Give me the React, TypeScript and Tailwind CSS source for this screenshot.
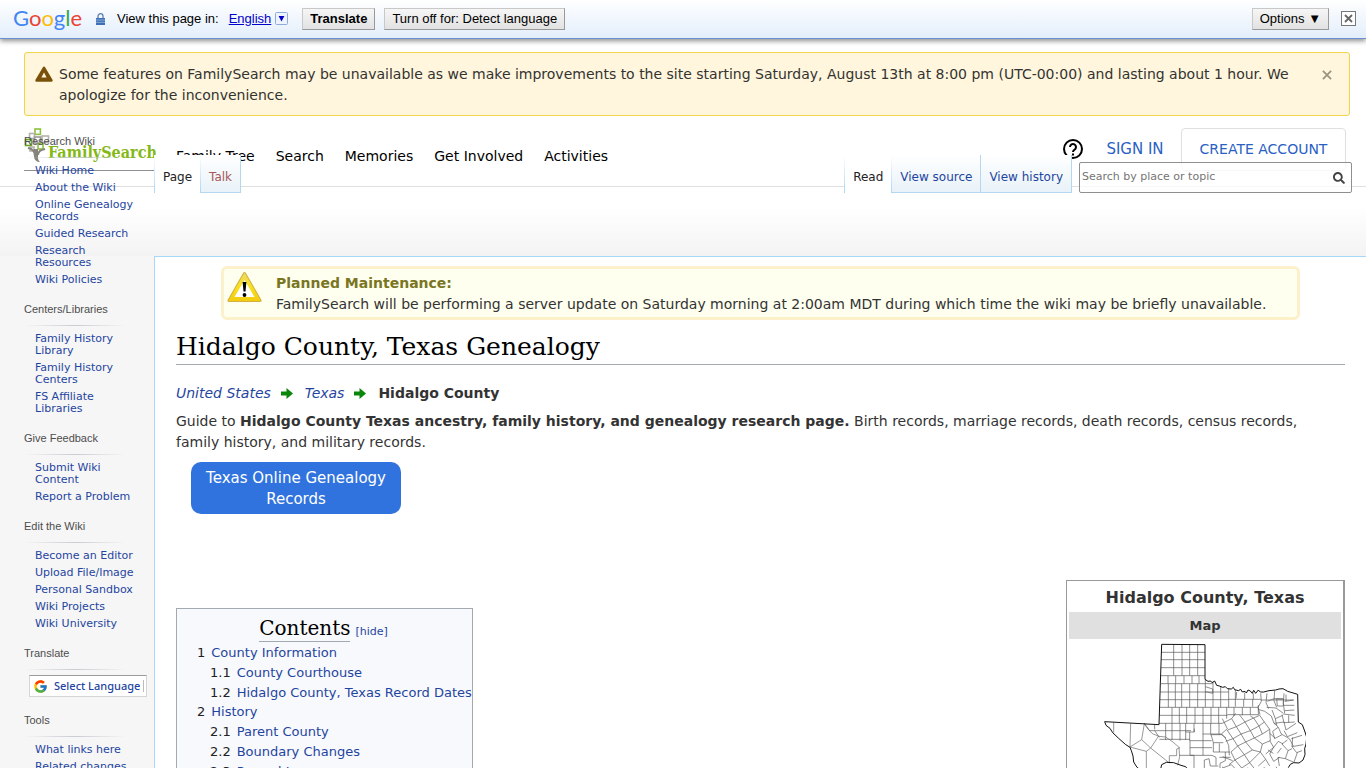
import { FcGoogle } from "react-icons/fc";
import { FaSearch } from "react-icons/fa";

const sections = [
  {
    title: "Research Wiki",
    links: [
      "Wiki Home",
      "About the Wiki",
      "Online Genealogy Records",
      "Guided Research",
      "Research Resources",
      "Wiki Policies",
    ],
  },
  {
    title: "Centers/Libraries",
    links: ["Family History Library", "Family History Centers", "FS Affiliate Libraries"],
  },
  { title: "Give Feedback", links: ["Submit Wiki Content", "Report a Problem"] },
  {
    title: "Edit the Wiki",
    links: [
      "Become an Editor",
      "Upload File/Image",
      "Personal Sandbox",
      "Wiki Projects",
      "Wiki University",
    ],
  },
  { title: "Translate", links: [] },
  { title: "Tools", links: ["What links here", "Related changes"] },
];

const contents = [
  { num: "1", label: "County Information", sub: false },
  { num: "1.1", label: "County Courthouse", sub: true },
  { num: "1.2", label: "Hidalgo County, Texas Record Dates", sub: true },
  { num: "2", label: "History", sub: false },
  { num: "2.1", label: "Parent County", sub: true },
  { num: "2.2", label: "Boundary Changes", sub: true },
  { num: "2.3", label: "Record Loss", sub: true },
];

const navLinks = ["Family Tree", "Search", "Memories", "Get Involved", "Activities"];

const barButton =
  "h-[22px] border border-[#c8c8c8] border-r-[#999] border-b-[#999] bg-linear-to-b from-[#f6f6f6] to-[#e2e2e2] px-[7px] text-[13px] leading-5 text-black whitespace-nowrap";

function TranslateBar() {
  return (
    <div className="relative z-10 flex h-[39px] items-center border-b border-[#6b8fd0] bg-linear-to-b from-white to-[#e3eefb] pr-[10px] pb-px pl-[13px] font-['Liberation_Sans',sans-serif] text-[13px] shadow-[0_2px_5px_rgba(0,0,0,0.45)]">
      <span className="w-[82px] pb-[2px] font-[Lato,sans-serif] text-[22px] leading-6">
        <span className="text-[#4285f4]">G</span>
        <span className="text-[#ea4335]">o</span>
        <span className="text-[#fbbc05]">o</span>
        <span className="text-[#4285f4]">g</span>
        <span className="text-[#34a853]">l</span>
        <span className="text-[#ea4335]">e</span>
      </span>
      <svg className="h-3 w-[11px]" viewBox="0 0 11 12">
        <path d="M3 5V3.2a2.5 2.5 0 0 1 5 0V5" fill="none" stroke="#5b7fb5" strokeWidth="1.3" />
        <rect x="1" y="5" width="9" height="7" fill="#3f6fb4" />
        <path d="M1 7h9M1 9.3h9" stroke="#9bbbe4" strokeWidth="0.8" />
      </svg>
      <span className="ml-[11px] text-black">View this page in:</span>
      <a href="#" className="ml-[10px] flex items-center text-[#0000cc]">
        <span className="underline">English</span>
        <svg className="ml-1 size-[13px]" viewBox="0 0 13 13">
          <rect x="0.5" y="0.5" width="12" height="12" rx="1" fill="#eef4fc" stroke="#8fabdc" />
          <path d="M3.6 4h5.8L6.5 9.5z" fill="#0000cc" />
        </svg>
      </a>
      <button className={`${barButton} ml-[14px] font-bold`}>Translate</button>
      <button className={`${barButton} ml-[9px]`}>Turn off for: Detect language</button>
      <button className={`${barButton} mr-3 ml-auto`}>Options ▼</button>
      <button aria-label="Close" className="size-[15px]">
        <svg viewBox="0 0 15 15">
          <rect x="0.5" y="0.5" width="14" height="14" fill="#fff" stroke="#777" />
          <path d="M4 4l7 7M11 4l-7 7" stroke="#666" strokeWidth="1.8" />
        </svg>
      </button>
    </div>
  );
}

function Notice() {
  return (
    <div className="mr-4 ml-6 flex h-16 rounded-[3px] border border-[#f0d548] bg-[#fff6dd] pt-[11px] pl-[10px] text-[14px] leading-[21px] text-[#333331]">
      <svg className="mt-[2px] h-4 w-[18px] shrink-0" viewBox="0 0 18 16">
        <path d="M9 1.8L16.4 14.4H1.6z" fill="#7a5109" stroke="#7a5109" strokeWidth="2.6" strokeLinejoin="round" />
        <path d="M9 6.6l2.6 4.8H6.4z" fill="#fff6dd" />
      </svg>
      <p className="ml-[6px] flex-1">
        Some features on FamilySearch may be unavailable as we make improvements to the site
        starting Saturday, August 13th at 8:00 pm (UTC-00:00) and lasting about 1 hour. We
        apologize for the inconvenience.
      </p>
      <button aria-label="Dismiss" className="mr-4 flex h-[21px] w-[11px] items-center">
        <svg className="size-[10px]" viewBox="0 0 11 11">
          <path d="M1 1l9 9M10 1l-9 9" stroke="#9a9482" strokeWidth="2" />
        </svg>
      </button>
    </div>
  );
}

function TreeLogo() {
  return (
    <svg className="h-[35px] w-[27px] shrink-0" viewBox="0 0 27 35">
      <g fill="none" strokeWidth="1.6">
        <rect x="11" y="1" width="5.4" height="5.4" stroke="#8bc23f" />
        <rect x="5.5" y="5.5" width="5" height="5" stroke="#b5b2ab" />
        <rect x="18" y="8" width="6.5" height="6.5" stroke="#b5b2ab" />
        <rect x="1.5" y="11.5" width="6" height="6" stroke="#6aa52c" />
        <rect x="10.5" y="9" width="6" height="6" stroke="#9e9b94" />
        <rect x="14" y="16" width="5" height="5" stroke="#8bc23f" />
        <rect x="6" y="19" width="4" height="4" stroke="#b5b2ab" />
      </g>
      <path d="M4 20c6 1 7 5 7 8M21 21c-4 1-7 2-7 6" fill="none" stroke="#87837b" strokeWidth="2" />
      <path d="M10 21h4v8c0 2 .5 4 2 5-3 0-6-2-6-6z" fill="#87837b" />
    </svg>
  );
}

function Header() {
  return (
    <header className="col-span-2 col-start-1 row-start-1 flex h-[71px] items-start self-start border-b border-[#dfdfe0] pl-6">
      <a href="#" className="mt-3 flex h-[43px] w-[131px] border-b border-[#8e9094]">
        <TreeLogo />
        <span className="-ml-[3px] pt-[15px] font-['DejaVu_Serif_Condensed','DejaVu_Serif',serif] text-[16px] leading-5 font-bold text-[#84b817]">
          FamilySearch
        </span>
      </a>
      <nav className="mt-[30px] ml-[21px] flex gap-[21px] text-[14px] leading-5 text-black">
        {navLinks.map((link) => (
          <a key={link} href="#" className="whitespace-nowrap">
            {link}
          </a>
        ))}
      </nav>
      <a href="#" aria-label="Help" className="mt-[23px] ml-auto">
        <svg className="size-5" viewBox="0 0 20 20" fill="none" stroke="#000" strokeWidth="2">
          <circle cx="10" cy="10" r="9" />
          <path d="M7 8a3 3 0 1 1 4.6 2.6C10.4 11.3 10 11.7 10 13" />
          <path d="M10 14.5v2" />
        </svg>
      </a>
      <a href="#" className="mt-[23px] ml-[22px] w-[60px] text-center text-[15px] leading-5 whitespace-nowrap text-[#2a5fc4]">
        SIGN IN
      </a>
      <a
        href="#"
        className="mt-3 mr-5 ml-4 h-[43px] w-[165px] rounded-sm border border-[#dedfe0] pt-[10px] text-center text-[14px] leading-5 text-[#2a5fc4]"
      >
        CREATE ACCOUNT
      </a>
    </header>
  );
}

function Sidebar() {
  return (
    <aside className="col-start-1 row-span-2 row-start-1 pt-[17px] pl-6">
      {sections.map((section) => (
        <div key={section.title} className="mb-[15px]">
          <h3 className="h-4 font-['Liberation_Sans',sans-serif] text-[11px] leading-4 text-[#4d4d4d]">
            {section.title}
          </h3>
          <div className="mt-2 mr-7 h-px bg-linear-to-r from-transparent via-[#c8ccd1] to-transparent" />
          {section.title === "Translate" ? (
            <button className="mt-[5px] ml-[5px] flex h-[22px] w-[118px] items-center border border-[#d5d5d5] border-t-[#9b9b9b] bg-white pl-[3px] text-[11px] text-[#1f45a0]">
              <FcGoogle size={15} />
              <span className="ml-[6px] font-['Noto_Sans',sans-serif] font-medium whitespace-nowrap">
                Select Language
              </span>
              <span className="ml-[3px] h-3 w-px bg-[#bbb]" />
            </button>
          ) : (
            <ul className="mt-[7px] flex w-[116px] flex-col gap-[5px] pl-[11px] text-[11px] leading-3 text-[#1f45a0]">
              {section.links.map((link) => (
                <li key={link}>
                  <a href="#">{link}</a>
                </li>
              ))}
            </ul>
          )}
        </div>
      ))}
    </aside>
  );
}

const tab =
  "flex h-[38px] items-center border-r border-b border-[#b5d8ee] bg-linear-to-b from-white to-[#e8f2f8] px-2 pt-[6px]";

function PageTabs() {
  return (
    <div className="col-start-2 row-start-1 mt-[39px] flex items-start self-start pr-[14px] text-[12px] leading-4">
      <div className="flex bg-white">
        <div className="w-px bg-linear-to-b from-white to-[#a7d7f9]" />
        <a href="#" className="flex items-center bg-white px-2 pt-[6px] text-[#222]">
          Page
        </a>
        <div className="w-px bg-linear-to-b from-white to-[#a7d7f9]" />
        <a href="#" className={`${tab} text-[#a55858]`}>
          Talk
        </a>
      </div>
      <div className="ml-auto flex bg-white">
        <div className="w-px bg-linear-to-b from-white to-[#a7d7f9]" />
        <a href="#" className="flex items-center bg-white px-2 pt-[6px] text-[#222]">
          Read
        </a>
        <div className="w-px bg-linear-to-b from-white to-[#a7d7f9]" />
        <a href="#" className={`${tab} text-[#1f45a0]`}>
          View source
        </a>
        <a href="#" className={`${tab} text-[#1f45a0]`}>
          View history
        </a>
      </div>
      <form className="mt-[7px] ml-[7px] flex h-[31px] w-[273px] items-center rounded-xs border border-[#8f8f8f] bg-white/75">
        <input
          type="text"
          aria-label="Search by place or topic"
          placeholder="Search by place or topic"
          className="min-w-0 flex-1 pb-[2px] pl-[2px] text-[11px] outline-none placeholder:text-[#757575]"
        />
        <button type="button" aria-label="Search" className="mr-[6px]">
          <FaSearch size={12} color="#444" />
        </button>
      </form>
    </div>
  );
}

function Arrow() {
  return (
    <svg className="mr-3 ml-[10px] h-[11px] w-3" viewBox="0 0 12 11">
      <path d="M0 3.6h5.5V0L12 5.5 5.500 11V7.4H0z" fill="#0a870a" />
    </svg>
  );
}

function Maintenance() {
  return (
    <div className="mx-[45px] flex h-[54px] rounded-md border-3 border-[#fdf1cb] bg-[#fffff0] pl-[3px]">
      <svg className="mt-[2px] h-8 w-[35px] shrink-0" viewBox="0 0 35 32">
        <defs>
          <linearGradient id="sign" x1="0" y1="0" x2="0" y2="1">
            <stop offset="0" stopColor="#ecd964" />
            <stop offset="0.5" stopColor="#f9e21a" />
            <stop offset="1" stopColor="#f3cc0f" />
          </linearGradient>
        </defs>
        <path d="M17.5 2.5L33 29.5H2z" fill="#cfae45" stroke="#d3b040" strokeWidth="3" strokeLinejoin="round" />
        <path d="M17.5 2.5L33 29.5H2z" fill="url(#sign)" stroke="url(#sign)" strokeLinejoin="round" />
        <path d="M17.5 9L27.500 26H7.5z" fill="#fff" />
        <path d="M15.6 11h3.8l-.9 9.500h-2z" fill="#000" />
        <circle cx="17.5" cy="24" r="1.9" fill="#000" />
      </svg>
      <div className="ml-[14px] pt-1 text-[14px] leading-[21px] text-[#333]">
        <p className="font-bold text-[#7a751f]">Planned Maintenance:</p>
        <p>
          FamilySearch will be performing a server update on Saturday morning at 2:00am MDT during
          which time the wiki may be briefly unavailable.
        </p>
      </div>
    </div>
  );
}

function Contents() {
  return (
    <div className="mt-7 w-[297px] shrink-0 border border-[#a2a9b1] bg-[#f8f9fc] pt-[7px] pb-3 pl-5 text-[13px]">
      <div className="flex h-[27px] items-baseline justify-center pr-[22px]">
        <h2 className="border-b border-[#a2a9b1] font-['DejaVu_Serif',serif] text-[20px] leading-[25px] text-black">
          Contents
        </h2>
        <span className="ml-[5px] text-[11px] text-[#1f45a0]">
          [<a href="#">hide</a>]
        </span>
      </div>
      <ul>
        {contents.map((item) => (
          <li
            key={item.num}
            className={item.sub ? "flex h-5 items-center gap-[6px] pl-[13px]" : "flex h-[19px] items-center gap-[6px]"}
          >
            <span className="text-[#222]">{item.num}</span>
            <a href="#" className="whitespace-nowrap text-[#1f45a0]">
              {item.label}
            </a>
          </li>
        ))}
      </ul>
    </div>
  );
}

function TexasMap() {
  return (
    <svg className="mx-auto mt-1 h-[190px] w-[202px]" viewBox="44 9 606 570" fill="none" stroke="#000">
      {/* county lines, panhandle */}
      <g strokeWidth="2" stroke="#555">
        <path d="M253 13v94M278 13v94M301 13v94M325 13v94M216 37h131M216 59h131M215 83h132M214 107h133" />
        <path d="M236 107v24M259 107v24M284 107v24M308 107v24M329 107v24M213 131h157" />
        <path d="M237 131v71M258 131v71M277 131v71M301 131v71M325 131v71M348 119v83M371 126v76M394 138v64M418 146v56" />
        <path d="M213 156h205M212 179h206M348 140l22 7v13l-22-5M418 178h96M211 202h295" />
        <path d="M248 202v48M270 202v48M292 202v48M317 202v48M341 202v48M365 202v48M388 202v48M412 202v34M434 202v26M459 202v24M483 202v22M507 195v27M210 226h204M414 224h95" />
        <path d="M438 150v50M463 178v22M490 178v22M440 176l2-20M466 158v20M492 160v18M514 160l2 24-10 18 6 22" />
        <path d="M209 250h190M165 250l16 22h124M196 254v14M229 250v50M248 250v50M272 250v52M289 250v50M314 250v26M341 250v26M364 250v30M389 250v34M289 276h26v-10M301 276v26h66M196 272l14 20M210 298h92" />
        <path d="M302 302v44h66M302 323h66M341 276v70M364 280l8 28v28h50M364 284h34l12 10M390 310v26M372 308h30M314 346v38M270 346h44M345 384v-24l14-4 4 22h24M368 346l12 6v24M390 352h34M408 336v26l-16 8v14" />
      </g>
      {/* far west */}
      <g strokeWidth="2" stroke="#666">
        <path d="M73 248v30M124 251l-2 70 35-22 8-48M157 299l27 25 24-36M122 321l49 13 13-10M171 334v60M184 324l56 45M165 251l10 15 14 15 20 8 20 2 22 15 18 16 2 28-6 26M240 369v-22h22v-20l10-4" />
        <path d="M314 384v80M340 384v70M290 400h120M300 430h140M370 384v90M400 380v90M430 390v90" />
      </g>
      {/* north east */}
      <g strokeWidth="2" stroke="#555">
        <path d="M514 180h98M533 160l-3 28 8 18M556 152l-2 30 8 20M584 160l-2 30 4 30M534 184l20-8 26 2M562 176h20v22h-18zM586 184l28-4M584 196h31M586 212l29-2M582 222l34 4M532 202l28 2 22 16M548 210l10 26 22-10M558 236l4 20M578 224l6 24 32-2M598 226v22M590 164v20" />
        <path d="M506 208l20 6 20 14 8 22 12 10 10 22 24 14 12 22M554 250l30-4 6 24M566 262l-16 12 6 22 22-12M590 270l30-20M584 272l10 18 30-12M606 296l32-10M610 292l-2 28 34-6M594 300l-16 12 18 20 12-6M608 320l14 18 16-6M596 332l-8 24 24 10M588 356l-22-4 4 26M624 338l-10 28" />
      </g>
      {/* central */}
      <g strokeWidth="2" stroke="#555">
        <path d="M399 236l15 30-18 16M399 250l28-14 14 24-26 10M427 236l12-16M441 260l14 22-24 14-18-26M441 260l26-14 16 26-28 10M450 224l17 22M467 246l26-12 16 24-26 14M483 228l10 6M493 234l18-8 14 20-16 12M525 246l16 22-22 14-10-24M519 282l-24 12-12-22M495 294l-26 12-14-24M469 306l-24 12-14-22M431 296l-22 8" />
        <path d="M541 268l2 34-24 10-24-18M519 312l-6 24-24-6-20-24M489 330l-24 14-20-26M445 318l-20 18 12 24 28-16M465 344l16 24 32-32M437 360l-18 14M437 360l20 24 24-16M481 368l16 20M513 336l16 22-22 20M541 302l12 20-24 20M541 280l16 14M553 322l-12 20 12 22 18-12M553 322l14-18 14 8M529 358l12 20M536 330l16 10M564 340l12-16" />
        <path d="M340 282h56l12 12 10 22 2 30M400 350l30 12M400 384l26-10 20 20 30-10 24 18 26-20M440 420l50-16 50 20 30-30M460 470l30-40 60 10M560 380l14 24 20-20" />
      </g>
      {/* state outline */}
      <g strokeWidth="2.8" strokeLinejoin="round">
        <path d="M217 13L347 14V118l9 6 8-1 4 5 8-5 6 13 8 2 10 4 8-2 6 6 12 1 6-5 4 7 11 3 7-4 5 8 8-2 4 5 5-9 7 3 6 7 4-9 6 9 8-10 6 6 10 0 16-4 20 -2 10-3 12-1 14 8 30 9 1 47 1 36 12 8 8 22 5 16-2 20-4 14 1 18-6 16-12 9-16-1-10 5-6 10" />
        <path d="M217 13L213 130l-4 124L46 245l4 11 12 9 8 13 18 17 20 18 14 9 4 10 5 16 2 18 10 16 20 14 30 20 18-16 6-26 14-7 22 1 22 8 14 4 18 24 20 34 18 30 18 36 34 14 16-2 4-40 34-50 60-36" />
      </g>
    </svg>
  );
}

export default function App() {
  return (
    <div className="h-screen overflow-hidden bg-[#f6f6f6] font-['DejaVu_Sans',sans-serif]">
      <div className="flex flex-col gap-[13px] bg-white">
        <TranslateBar />
        <Notice />
      </div>
      <div className="grid grid-cols-[154px_minmax(0,1fr)] grid-rows-[140px_auto]">
        <div className="col-span-2 col-start-1 row-start-1 bg-linear-to-b from-white from-65% to-[#f3f3f3]" />
        <Header />
        <Sidebar />
        <PageTabs />
        <main className="col-start-2 row-start-2 border-t border-l border-[#a7d7f9] bg-white px-[21px] pt-[9px] text-[14px] leading-[21px] text-[#333]">
          <Maintenance />
          <h1 className="mt-3 h-[33px] border-b border-[#a2a9b1] font-['DejaVu_Serif',serif] text-[25px] leading-[30px] text-black">
            Hidalgo County, Texas Genealogy
          </h1>
          <div className="mt-[18px] flex items-center">
            <a href="#" className="text-[#1f45a0] italic">
              United States
            </a>
            <Arrow />
            <a href="#" className="text-[#1f45a0] italic">
              Texas
            </a>
            <Arrow />
            <b>Hidalgo County</b>
          </div>
          <p className="mt-[7px] pr-3">
            Guide to <b>Hidalgo County Texas ancestry, family history, and genealogy research page.</b>{" "}
            Birth records, marriage records, death records, census records, family history, and
            military records.
          </p>
          <button className="mt-[9px] ml-[15px] h-[52px] w-[210px] rounded-[10px] bg-[#3173de] pt-px text-[15px] leading-[21px] text-white">
            Texas Online Genealogy Records
          </button>
          <div className="mt-[66px] flex items-start justify-between">
            <Contents />
            <aside className="w-[279px] border border-r-2 border-[#999] p-[2px] text-center font-bold">
              <h2 className="h-[29px] text-[16px] leading-[29px]">Hidalgo County, Texas</h2>
              <h3 className="h-[27px] bg-[#e0e0e0] text-[13px] leading-[27px]">Map</h3>
              <TexasMap />
            </aside>
          </div>
        </main>
      </div>
    </div>
  );
}
